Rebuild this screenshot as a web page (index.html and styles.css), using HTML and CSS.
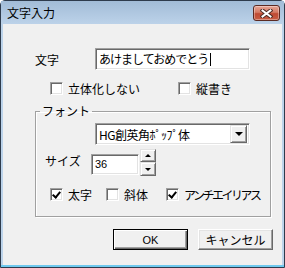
FILE: index.html
```html
<!DOCTYPE html>
<html lang="ja">
  <head>
    <meta charset="UTF-8" />
    <title>文字入力</title>
    <link rel="stylesheet" href="styles.css">
  </head>
  <body>
    <div class="window">
      <div class="titlebar">
        <span class="title">文字入力</span>
        <button class="close-btn">
          <svg width="13" height="9" viewBox="0 0 13 9">
            <path d="M2.5 1.5 L10.5 7.5 M10.5 1.5 L2.5 7.5" stroke="#4a2a24" stroke-width="4" stroke-linecap="square" />
            <path d="M2.5 1.5 L10.5 7.5 M10.5 1.5 L2.5 7.5" stroke="#fff" stroke-width="2" stroke-linecap="square" />
          </svg>
        </button>
      </div>

      <div class="client">
        <!-- text row -->
        <div class="text-row">
          <span class="label">文字</span>
          <div class="textbox">あけましておめでとう<span class="caret"></span></div>
        </div>

        <div class="check-row top-checks">
          <label class="check col-wide"><span class="box"></span>立体化しない</label>
          <label class="check"><span class="box"></span>縦書き</label>
        </div>

        <!-- font group -->
        <fieldset class="group">
          <legend>フォント</legend>
          <div class="combo">
            <span class="combo-text">HG創英角ﾎﾟｯﾌﾟ体</span>
            <span class="combo-btn"><span class="tri-down"></span></span>
          </div>

          <div class="size-row">
            <span class="size-label">サイズ</span>
            <div class="spin-input">36</div>
            <div class="spin">
              <span class="spin-btn"><span class="tri-up small"></span></span>
              <span class="spin-btn"><span class="tri-down small"></span></span>
            </div>
          </div>

          <div class="check-row group-checks">
            <label class="check col-1"><span class="box checked"></span>太字</label>
            <label class="check col-2"><span class="box"></span>斜体</label>
            <label class="check"><span class="box checked"></span><span class="narrow">アンチエイリアス</span></label>
          </div>
        </fieldset>

        <div class="buttons">
          <button class="btn default">OK</button>
          <button class="btn">キャンセル</button>
        </div>
      </div>
    </div>
  </body>
</html>
```

FILE: styles.css
```css
body {
  margin: 0;
  padding: 0;
  background: #ffffff;
  font-family: "Noto Sans CJK JP", "Liberation Sans", sans-serif;
  font-size: 12px;
  color: #000;
}

/* Window frame */
.window {
  width: 285px;
  height: 268px;
  box-sizing: border-box;
  border: 1px solid #2e3b4c;
  border-radius: 5px 5px 0 0;
  background: #bcd3ea;
  padding: 0 2px 2px 2px;
  display: flex;
  flex-direction: column;
  box-shadow: inset 0 -2px 0 #6fc9ee;
}

.titlebar {
  height: 23px;
  display: flex;
  align-items: center;
  justify-content: space-between;
  background: linear-gradient(to bottom, #a2bcd7, #bcd2e9);
  margin: 0 -2px;
  padding-left: 6px;
  padding-right: 4px;
}

.title {
  font-size: 12px;
  line-height: 14px;
  color: #000;
}

.close-btn {
  width: 27px;
  height: 16px;
  margin-top: 1px;
  padding: 0;
  border: 1px solid #5b2a22;
  border-radius: 3px;
  background: linear-gradient(to bottom, #e7a696 0%, #d47a64 45%, #bf4a33 55%, #c85d44 100%);
  box-shadow: inset 0 0 0 1px rgba(255, 255, 255, 0.35);
  display: flex;
  align-items: center;
  justify-content: center;
}

/* Client area */
.client {
  flex: 1;
  background: #f0f0f0;
  padding-top: 24px;
}

.text-row {
  display: flex;
  align-items: center;
  margin-left: 32px;
  height: 22px;
}

.label {
  width: 60px;
}

/* classic sunken field */
.textbox,
.combo,
.spin-input {
  box-sizing: border-box;
  background: #fff;
  border: 1px solid;
  border-color: #a0a0a0 #fff #fff #a0a0a0;
  box-shadow: inset 1px 1px 0 #696969, inset -1px -1px 0 #e3e3e3;
}

.textbox {
  width: 155px;
  height: 22px;
  padding: 0 3px;
  line-height: 20px;
  letter-spacing: -1px;
  display: flex;
  align-items: center;
}

.caret {
  display: inline-block;
  width: 1px;
  height: 13px;
  margin-left: 2px;
  background: #000;
}

/* checkboxes */
.check-row {
  display: flex;
  align-items: center;
  height: 13px;
}

.top-checks {
  margin-top: 12px;
  margin-left: 47px;
}

.check {
  display: flex;
  align-items: center;
  gap: 5px;
  line-height: 13px;
}

.col-wide {
  width: 128px;
}

.box {
  width: 13px;
  height: 13px;
  box-sizing: border-box;
  border: 1px solid;
  border-color: #a0a0a0 #fff #fff #a0a0a0;
  box-shadow: inset 1px 1px 0 #696969, inset -1px -1px 0 #e3e3e3;
  background: #fff;
  flex-shrink: 0;
  position: relative;
}

.box.checked::after {
  content: "";
  position: absolute;
  left: 3px;
  top: 1px;
  width: 3px;
  height: 6px;
  border: solid #000;
  border-width: 0 2px 2px 0;
  transform: rotate(40deg);
}

/* group box */
.group {
  margin: 9px 0 0 32px;
  width: 236px;
  box-sizing: border-box;
  padding: 0 0 15px 0;
  border: 1px solid #a0a0a0;
  box-shadow: 1px 1px 0 #fff, inset 1px 1px 0 #fff;
  min-inline-size: 0;
}

.group legend {
  margin-left: 4px;
  padding: 0 2px;
  line-height: 14px;
}

.combo {
  margin: 5px 0 0 59px;
  width: 155px;
  height: 22px;
  display: flex;
  align-items: center;
  justify-content: space-between;
  padding: 0 2px 0 3px;
}

.combo-text {
  letter-spacing: -0.5px;
}

/* classic raised buttons */
.combo-btn,
.spin-btn {
  box-sizing: border-box;
  background: #f0f0f0;
  border: 1px solid;
  border-color: #e3e3e3 #696969 #696969 #e3e3e3;
  box-shadow: inset 1px 1px 0 #fff, inset -1px -1px 0 #a0a0a0;
  display: flex;
  align-items: center;
  justify-content: center;
}

.combo-btn {
  width: 17px;
  height: 18px;
}

.tri-down {
  width: 0;
  height: 0;
  border-left: 4px solid transparent;
  border-right: 4px solid transparent;
  border-top: 4px solid #000;
}

.tri-up {
  width: 0;
  height: 0;
  border-left: 4px solid transparent;
  border-right: 4px solid transparent;
  border-bottom: 4px solid #000;
}

.tri-down.small,
.tri-up.small {
  border-left-width: 3px;
  border-right-width: 3px;
  border-top-width: 3px;
  border-bottom-width: 3px;
}

.tri-down.small {
  border-bottom: 0;
}

.tri-up.small {
  border-top: 0;
}

.size-row {
  display: flex;
  align-items: flex-start;
  margin-top: 4px;
  height: 27px;
}

.size-label {
  margin: 5px 0 0 9px;
  width: 46px;
  line-height: 14px;
}

.spin-input {
  margin-top: 5px;
  width: 48px;
  height: 21px;
  padding-left: 3px;
  line-height: 19px;
  font-family: "Liberation Sans", sans-serif;
  font-size: 11px;
}

.spin {
  margin-left: 1px;
  width: 16px;
  display: flex;
  flex-direction: column;
}

.spin-btn {
  width: 16px;
  height: 13px;
}

.spin-btn + .spin-btn {
  height: 14px;
}

.group-checks {
  margin: 12px 0 0 14px;
}

.col-1 {
  width: 56px;
}

.col-2 {
  width: 60px;
}

.narrow {
  letter-spacing: -2.5px;
}

/* dialog buttons */
.buttons {
  display: flex;
  justify-content: flex-end;
  gap: 10px;
  margin-top: 12px;
  padding-right: 9px;
}

.btn {
  width: 75px;
  height: 21px;
  box-sizing: border-box;
  padding: 0;
  background: #f0f0f0;
  border: 1px solid;
  border-color: #fff #696969 #696969 #fff;
  box-shadow: inset -1px -1px 0 #a0a0a0, inset 1px 1px 0 #e3e3e3;
  font-family: "Noto Sans CJK JP", "Liberation Sans", sans-serif;
  font-size: 12px;
  color: #000;
}

.btn.default {
  border-color: #000;
  box-shadow: inset 1px 1px 0 #fff, inset -1px -1px 0 #696969, inset -2px -2px 0 #a0a0a0;
  font-family: "Liberation Sans", sans-serif;
  font-size: 11px;
}
```
